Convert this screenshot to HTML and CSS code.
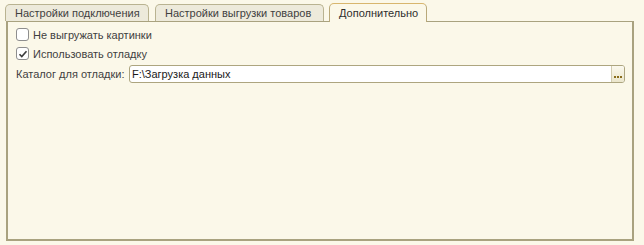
FILE: index.html
```html
<!DOCTYPE html>
<html lang="ru">
<head>
<meta charset="utf-8">
<link rel="stylesheet" href="styles.css">
</head>
<body>
<div class="form">
  <div class="tabs">
    <div class="tab tab-1">Настройки подключения</div>
    <div class="tab tab-2">Настройки выгрузки товаров</div>
    <div class="tab tab-active">Дополнительно</div>
  </div>
  <div class="panel">
    <label class="check-row">
      <span class="checkbox"></span>
      <span class="check-label">Не выгружать картинки</span>
    </label>
    <label class="check-row">
      <span class="checkbox checked">
        <svg width="10" height="10" viewBox="0 0 10 10"><path d="M1.5 5.2 L3.8 7.6 L8.5 2.2" fill="none" stroke="#3c3c3c" stroke-width="1.6"/></svg>
      </span>
      <span class="check-label">Использовать отладку</span>
    </label>
    <div class="field-row">
      <span class="field-label">Каталог для отладки:</span>
      <div class="input">
        <span class="input-text">F:\Загрузка данных</span>
        <span class="input-btn"><i></i><i></i><i></i></span>
      </div>
    </div>
  </div>
</div>
</body>
</html>
```
FILE: styles.css
```css
html, body {
  margin: 0;
  padding: 0;
  background: #fbf8e9;
}
body {
  font-family: "Liberation Sans", Arial, sans-serif;
  font-size: 11px;
  color: #3f3f3f;
}
.form {
  padding: 3px 0 0 5px;
}
.tabs {
  display: flex;
  align-items: flex-end;
  height: 18px;
  position: relative;
  z-index: 2;
}
.tab {
  box-sizing: border-box;
  height: 17px;
  border: 1px solid #b9b391;
  border-bottom: none;
  border-radius: 5px 5px 0 0;
  background: #edeadb;
  line-height: 16px;
  padding: 0 0 0 9px;
  white-space: nowrap;
  color: #3f3f3f;
}
.tab-1 { width: 144px; margin-right: 6px; }
.tab-2 { width: 169px; margin-right: 5px; }
.tab-active {
  width: 98px;
  height: 19px;
  margin-bottom: -1px;
  background: #fbf8e9;
  border-color: #b9a97a;
  border-top-color: #d8b66e;
  line-height: 18px;
  padding-left: 9px;
  color: #2e2e2e;
}
.panel {
  box-sizing: border-box;
  margin-left: 1px;
  width: 628px;
  height: 220px;
  border: 1px solid #a9a27f;
  border-width: 1px 2px 2px 2px;
  background: #fbf8e9;
  padding: 3px 0 0 8px;
}
.check-row {
  display: flex;
  align-items: center;
  height: 19px;
}
.checkbox {
  box-sizing: border-box;
  width: 13px;
  height: 13px;
  border: 1px solid #8e8e8e;
  border-radius: 3px;
  background: #fff;
  margin-right: 4px;
  display: flex;
  align-items: center;
  justify-content: center;
}
.check-label {
  white-space: nowrap;
}
.field-row {
  display: flex;
  align-items: center;
  margin-top: 2px;
  height: 18px;
}
.field-label {
  width: 113px;
  white-space: nowrap;
}
.input {
  box-sizing: border-box;
  display: flex;
  align-items: stretch;
  width: 496px;
  height: 18px;
  border: 1px solid #ada57f;
  border-radius: 3px;
  background: #fff;
}
.input-text {
  flex: 1;
  padding-left: 2px;
  line-height: 16px;
  color: #1a1a1a;
  white-space: nowrap;
}
.input-btn {
  width: 13px;
  border-left: 1px solid #d2ccb0;
  border-radius: 0 2px 2px 0;
  background: linear-gradient(#fbf9ee, #ebe6cc);
  display: flex;
  align-items: flex-end;
  justify-content: center;
  gap: 1px;
  padding-bottom: 4px;
  box-sizing: border-box;
}
.input-btn i {
  display: block;
  width: 2px;
  height: 2px;
  background: #8a6d1c;
}
```
